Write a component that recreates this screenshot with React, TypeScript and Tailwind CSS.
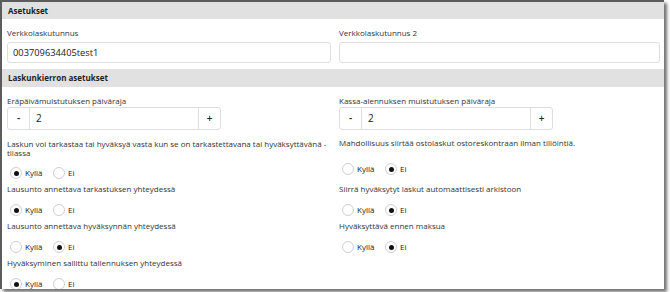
import React from "react";

const Radio = ({ checked }: { checked: boolean }) => (
  <span className="w-[12px] h-[12px] rounded-full border border-[#cfcfcf] bg-white flex items-center justify-center shrink-0">
    {checked && <span className="w-[5px] h-[5px] rounded-full bg-[#111]" />}
  </span>
);

const YesNo = ({ value, className }: { value: boolean; className?: string }) => (
  <div className={"flex items-center ml-[3px] text-[#222] font-medium " + (className ?? "")}>
    <Radio checked={value} />
    <span className="ml-[3px] leading-[12px] w-[20px]">Kyllä</span>
    <span className="ml-[8px]" />
    <Radio checked={!value} />
    <span className="ml-[3px] leading-[12px]">Ei</span>
  </div>
);

const Stepper = ({ value }: { value: string }) => (
  <div className="w-[214px] h-[23px] border border-[#dedede] rounded-[3px] flex items-center text-[#222]">
    <div className="w-[22px] h-full border-r border-[#dedede] flex items-center justify-center text-[10px] font-semibold">-</div>
    <div className="flex-1 pl-[6px] text-[10px] font-medium">{value}</div>
    <div className="w-[22px] h-full border-l border-[#dedede] flex items-center justify-center text-[10px] font-semibold">+</div>
  </div>
);

const Header = ({ title, h }: { title: string; h: string }) => (
  <div className={h + " bg-[#e1e1e1] pl-[6px] flex items-center text-[8px] font-bold text-[#1e1e1e]"}>{title}</div>
);

export default function App() {
  return (
    <div className="w-[670px] h-[292px] bg-white">
      <div className="w-[664px] h-[289px] border-l-2 border-t-2 border-[#5c5c5c] shadow-[3px_3px_3px_rgba(0,0,0,0.55)] bg-white overflow-hidden font-['Open_Sans',sans-serif] text-[8px] text-[#333]">
        <Header title="Asetukset" h="h-[17px]" />
        <div className="grid grid-cols-[324px_1fr] gap-x-2 pl-[5px] pr-[4px] pt-[9px] pb-[6px]">
          <div>
            <div className="leading-[10px] mb-[4px]">Verkkolaskutunnus</div>
            <div className="h-[21px] border border-[#dedede] rounded-[3px] flex items-center pl-[5px] text-[9.3px] text-[#1a1a1a]">
              003709634405test1
            </div>
          </div>
          <div>
            <div className="leading-[10px] mb-[4px]">Verkkolaskutunnus 2</div>
            <div className="h-[21px] border border-[#dedede] rounded-[3px]" />
          </div>
        </div>
        <Header title="Laskunkierron asetukset" h="h-[18px]" />
        <div className="grid grid-cols-[324px_1fr] gap-x-2 pl-[5px] pr-[4px] pt-[9px]">
          <div>
            <div className="leading-[10px] mb-[1px]">Eräpäivämuistutuksen päiväraja</div>
            <Stepper value="2" />
          </div>
          <div>
            <div className="leading-[10px] mb-[1px]">Kassa-alennuksen muistutuksen päiväraja</div>
            <Stepper value="2" />
          </div>

          <div className="pt-[8.5px]">
            <div className="leading-[9.5px] whitespace-nowrap">
              Laskun voi tarkastaa tai hyväksyä vasta kun se on tarkastettavana tai hyväksyttävänä -
              <br />
              tilassa
            </div>
            <YesNo value={true} className="mt-[9.5px]" />
          </div>
          <div className="pt-[7.5px]">
            <div className="leading-[9.5px]">Mahdollisuus siirtää ostolaskut ostoreskontraan ilman tiliöintiä.</div>
            <YesNo value={false} className="mt-[16px]" />
          </div>

          <div className="pt-[4.5px]">
            <div className="leading-[9.5px]">Lausunto annettava tarkastuksen yhteydessä</div>
            <YesNo value={true} className="mt-[11px]" />
          </div>
          <div className="pt-[4.5px]">
            <div className="leading-[9.5px]">Siirrä hyväksytyt laskut automaattisesti arkistoon</div>
            <YesNo value={false} className="mt-[11px]" />
          </div>

          <div className="pt-[4.5px]">
            <div className="leading-[9.5px]">Lausunto annettava hyväksynnän yhteydessä</div>
            <YesNo value={false} className="mt-[11px]" />
          </div>
          <div className="pt-[4.5px]">
            <div className="leading-[9.5px]">Hyväksyttävä ennen maksua</div>
            <YesNo value={false} className="mt-[11px]" />
          </div>

          <div className="pt-[4.5px]">
            <div className="leading-[9.5px]">Hyväksyminen sallittu tallennuksen yhteydessä</div>
            <YesNo value={true} className="mt-[11px]" />
          </div>
        </div>
      </div>
    </div>
  );
}
